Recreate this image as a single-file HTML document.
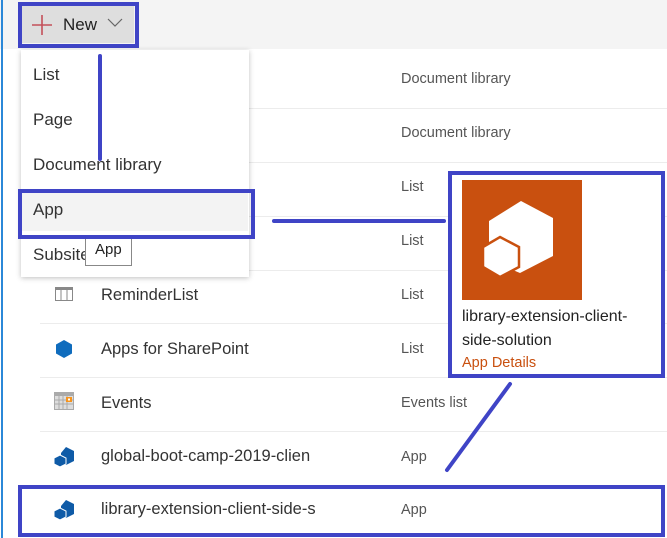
<!DOCTYPE html>
<html><head><meta charset="utf-8"><style>
*{margin:0;padding:0;box-sizing:border-box}
body{width:667px;height:538px;overflow:hidden;background:#fff;font-family:"Liberation Sans",sans-serif;position:relative;color:#333}
.abs{position:absolute}
.top{left:0;top:0;width:667px;height:49px;background:#f4f4f4}
.sep{left:40px;width:627px;height:1px;background:#ececec}
.name{left:101px;font-size:16.5px;color:#333;white-space:nowrap}
.type{left:401px;font-size:14.5px;color:#555}
.box{border:4px solid #3f44c6}
.menu{left:21px;top:50px;width:228px;height:227px;background:#fff;box-shadow:0 1px 5px rgba(0,0,0,.25)}
.mi{left:33px;font-size:17px;color:#333}
</style></head><body>
<div class="abs top"></div>
<div class="abs" style="left:1px;top:0;width:2px;height:538px;background:#2b88d8"></div>
<div class="abs" style="left:22px;top:6px;width:112px;height:37px;background:#dedede"></div>
<svg class="abs" style="left:31px;top:14px" width="22" height="22"><path d="M11 1V21M1 11H21" stroke="#c4505a" stroke-width="1.6"/></svg>
<div class="abs" style="left:63px;top:15px;font-size:17px;color:#222">New</div>
<svg class="abs" style="left:107px;top:18px" width="16" height="10"><path d="M1 1L8 8L15 1" stroke="#666" fill="none" stroke-width="1.2"/></svg>
<div class="abs box" style="left:18px;top:2px;width:121px;height:46px"></div>

<div class="abs sep" style="top:108px"></div>
<div class="abs sep" style="top:162px"></div>
<div class="abs sep" style="top:216px"></div>
<div class="abs sep" style="top:270px"></div>
<div class="abs sep" style="top:323px"></div>
<div class="abs sep" style="top:377px"></div>
<div class="abs sep" style="top:431px"></div>

<div class="abs type" style="top:71px">Document library</div>
<div class="abs type" style="top:125px">Document library</div>
<div class="abs type" style="top:179px">List</div>
<div class="abs type" style="top:233px">List</div>
<div class="abs type" style="top:287px">List</div>
<div class="abs type" style="top:341px">List</div>
<div class="abs type" style="top:395px">Events list</div>
<div class="abs type" style="top:449px">App</div>
<div class="abs type" style="top:502px">App</div>

<svg class="abs" style="left:55px;top:287px" width="18" height="14"><rect x="0.5" y="0.5" width="17" height="13" fill="#fff" stroke="#888"/><rect x="0" y="0" width="18" height="3" fill="#888"/><path d="M6 3V14M12 3V14" stroke="#888"/></svg>
<div class="abs name" style="top:286px">ReminderList</div>
<svg class="abs" style="left:54px;top:339px" width="20" height="20"><polygon points="10,1 18,5.5 18,14.5 10,19 2,14.5 2,5.5" fill="#0f6cbd"/></svg>
<div class="abs name" style="top:340px">Apps for SharePoint</div>
<svg class="abs" style="left:54px;top:392px" width="20" height="18"><rect x="0" y="0" width="20" height="18" fill="#aaa"/><rect x="1" y="4" width="18" height="13" fill="#ddd"/><path d="M1 8H19M1 12H19M5 4V17M9 4V17M13 4V17" stroke="#aaa"/><rect x="12" y="5" width="6" height="5" fill="#f7941d"/><rect x="14" y="6.5" width="2" height="2" fill="#fff"/></svg>
<div class="abs name" style="top:394px">Events</div>
<svg class="abs" style="left:53px;top:446px" width="22" height="22"><polygon points="13,1 21,5 21,15 13,19 8,16 8,7" fill="#0f5ba7"/><polygon points="7,9 13,12 13,18 7,21 1,18 1,12" fill="#0f5ba7" stroke="#fff" stroke-width="1"/></svg>
<div class="abs name" style="top:447px">global-boot-camp-2019-clien</div>
<svg class="abs" style="left:53px;top:499px" width="22" height="22"><polygon points="13,1 21,5 21,15 13,19 8,16 8,7" fill="#0f5ba7"/><polygon points="7,9 13,12 13,18 7,21 1,18 1,12" fill="#0f5ba7" stroke="#fff" stroke-width="1"/></svg>
<div class="abs name" style="top:500px">library-extension-client-side-s</div>
<div class="abs box" style="left:18px;top:485px;width:647px;height:52px"></div>

<div class="abs menu"></div>
<div class="abs" style="left:22px;top:190px;width:226px;height:41px;background:#f3f3f3"></div>
<div class="abs mi" style="top:65px">List</div>
<div class="abs mi" style="top:110px">Page</div>
<div class="abs mi" style="top:155px">Document library</div>
<div class="abs mi" style="top:200px">App</div>
<div class="abs mi" style="top:245px">Subsite</div>
<div class="abs" style="left:85px;top:236px;width:47px;height:30px;background:#fff;border:1px solid #888;font-size:15px;color:#222;padding:4px 0 0 9px">App</div>
<div class="abs box" style="left:18px;top:189px;width:237px;height:50px"></div>
<div class="abs" style="left:98px;top:54px;width:4px;height:107px;background:#3f44c6;border-radius:2px"></div>
<div class="abs" style="left:272px;top:219px;width:174px;height:4px;background:#3f44c6;border-radius:2px"></div>
<svg class="abs" style="left:440px;top:378px" width="80" height="100"><path d="M70 6L7 92" stroke="#3f44c6" stroke-width="4" stroke-linecap="round"/></svg>

<div class="abs" style="left:448px;top:171px;width:217px;height:207px;background:#fff"></div>
<div class="abs" style="left:462px;top:180px;width:120px;height:120px;background:#c9500f"></div>
<svg class="abs" style="left:462px;top:180px" width="120" height="120"><polygon points="59,21 91,38 91,76 58,93 27,80 27,41" fill="#fff"/><polygon points="38,57 57,67 57,87 38,97 21,87 21,67" fill="#fff" stroke="#c9500f" stroke-width="2.5"/></svg>
<div class="abs" style="left:462px;top:305px;font-size:16px;color:#222;line-height:24px">library-extension-client-<br>side-solution</div>
<div class="abs" style="left:462px;top:355px;font-size:14.5px;color:#c9500f">App Details</div>
<div class="abs box" style="left:448px;top:171px;width:217px;height:207px"></div>
</body></html>
